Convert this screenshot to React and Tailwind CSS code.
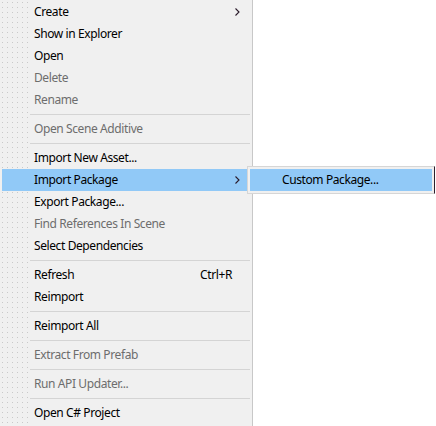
const items = [
  { label: 'Create', arrow: true },
  { label: 'Show in Explorer' },
  { label: 'Open' },
  { label: 'Delete', disabled: true },
  { label: 'Rename', disabled: true },
  { sep: true },
  { label: 'Open Scene Additive', disabled: true },
  { sep: true },
  { label: 'Import New Asset...' },
  { label: 'Import Package', arrow: true, active: true },
  { label: 'Export Package...' },
  { label: 'Find References In Scene', disabled: true },
  { label: 'Select Dependencies' },
  { sep: true },
  { label: 'Refresh', shortcut: 'Ctrl+R' },
  { label: 'Reimport' },
  { sep: true },
  { label: 'Reimport All' },
  { sep: true },
  { label: 'Extract From Prefab', disabled: true },
  { sep: true },
  { label: 'Run API Updater...', disabled: true },
  { sep: true },
  { label: 'Open C# Project' },
];

const dots =
  'bg-fixed bg-[radial-gradient(circle,#c9c9c9_0.6px,transparent_1px)] bg-[length:5px_5px]';

const Arrow = () => (
  <svg width="5" height="8" viewBox="0 0 5 8" className="shrink-0">
    <polyline points="0.5,0.5 4,4 0.5,7.5" fill="none" stroke="#2a1a2a" strokeWidth="1.1" />
  </svg>
);

const MenuRow = ({ item }) => {
  if (item.sep) {
    return (
      <div className="flex h-[7px]">
        <div className={`w-[28px] shrink-0 ${dots}`} />
        <div className="flex-1 pt-[3px]">
          <div className="h-px bg-[#d4d4d4]" />
        </div>
      </div>
    );
  }

  return (
    <div className={`flex h-[22px] items-stretch ${item.active ? 'bg-[#91c9f7]' : ''}`}>
      <div className={`w-[28px] shrink-0 ${item.active ? '' : dots}`} />
      <div className="flex flex-1 items-center pl-[4px] pr-[10px]">
        <span className={`flex-1 ${item.disabled ? 'text-[#6d6d6d]' : 'text-black'}`}>
          {item.label}
        </span>
        {item.shortcut && <span className="mr-[8px] text-black">{item.shortcut}</span>}
        {item.arrow && <Arrow />}
      </div>
    </div>
  );
};

export default function App() {
  return (
    <div className="relative h-[426px] w-[436px] overflow-hidden bg-white font-['Noto_Sans',sans-serif] text-[12px] leading-none tracking-[-0.4px]">
      <div className="h-full w-[253px] border-r border-[#c8c8c8] bg-[#f0f0f0] px-[2px] pt-px">
        {items.map((item, i) => (
          <MenuRow key={i} item={item} />
        ))}
      </div>

      <div className="absolute left-[247px] top-[166px] h-[28px] w-[188px] border border-[#d6d6d6] border-r-[#2e1f2e] bg-[#f0f0f0] p-[2px]">
        <div className="flex h-[22px] items-center bg-[#91c9f7] pl-[32px] text-black">
          Custom Package...
        </div>
      </div>
    </div>
  );
}
